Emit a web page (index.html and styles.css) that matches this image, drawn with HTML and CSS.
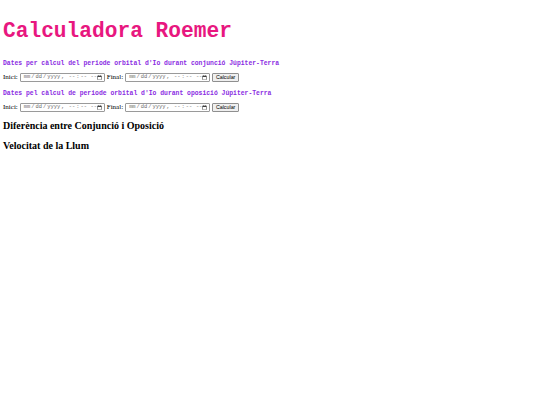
FILE: index.html
```html
<!DOCTYPE html>
<html lang="ca">
<head>
<meta charset="utf-8">
<title>Calculadora Roemer</title>
<link rel="stylesheet" href="styles.css">
</head>
<body>
<h1 class="title">Calculadora Roemer</h1>
<h5 class="subtitle">Dates per càlcul del periode orbital d'Io durant conjunció Júpiter-Terra</h5>
<form class="row">
<label>Inici:</label> <input class="dt" type="datetime-local"> <label>Final:</label> <input class="dt" type="datetime-local"> <button class="btn" type="button">Calcular</button>
</form>
<h5 class="subtitle">Dates pel càlcul de periode orbital d'Io durant oposició Júpiter-Terra</h5>
<form class="row">
<label>Inici:</label> <input class="dt" type="datetime-local"> <label>Final:</label> <input class="dt" type="datetime-local"> <button class="btn" type="button">Calcular</button>
</form>
<h3 class="result first">Diferència entre Conjunció i Oposició</h3>
<h3 class="result">Velocitat de la Llum</h3>
</body>
</html>
```

FILE: styles.css
```css
body {
  font-family: "Liberation Serif", serif;
  margin: 0 3px;
  padding-top: 19px;
  color: #000;
  background: #fff;
}
.title {
  font-family: "Liberation Mono", monospace;
  color: #e8177f;
  font-size: 21.2px;
  line-height: 24px;
  font-weight: bold;
  margin: 0;
}
.subtitle {
  font-family: "Liberation Mono", monospace;
  color: #8a2be2;
  font-size: 6.4px;
  line-height: 8px;
  font-weight: bold;
  margin: 17px 0 0;
}
.row + .subtitle {
  margin-top: 8px;
}
.row {
  margin: 4px 0 0;
  font-size: 7px;
  line-height: 10px;
  height: 10px;
  display: flex;
  align-items: center;
  gap: 2px;
  white-space: nowrap;
  color: #000;
}
.row label {
  font-weight: normal;
  color: #000;
}
.dt {
  box-sizing: border-box;
  width: 85px;
  height: 9px;
  margin: 0;
  padding: 0 2px;
  font-family: "Liberation Mono", monospace;
  font-size: 5.4px;
  color: #6e6e6e;
  border: 1px solid #9a9a9a;
  border-radius: 1px;
  background: #fff;
}
.dt::-webkit-calendar-picker-indicator {
  width: 5px;
  height: 5px;
  padding: 0;
  margin: 0;
}
.btn {
  box-sizing: border-box;
  width: 27px;
  height: 9px;
  margin: 0;
  padding: 0;
  font-family: "Liberation Sans", sans-serif;
  font-size: 5.3px;
  line-height: 7px;
  color: #000;
  background: #efefef;
  border: 1px solid #8f8f8f;
  border-radius: 1px;
}
.result {
  font-family: "Liberation Serif", serif;
  font-size: 10px;
  line-height: 12px;
  font-weight: bold;
  margin: 8px 0 0;
}
```
